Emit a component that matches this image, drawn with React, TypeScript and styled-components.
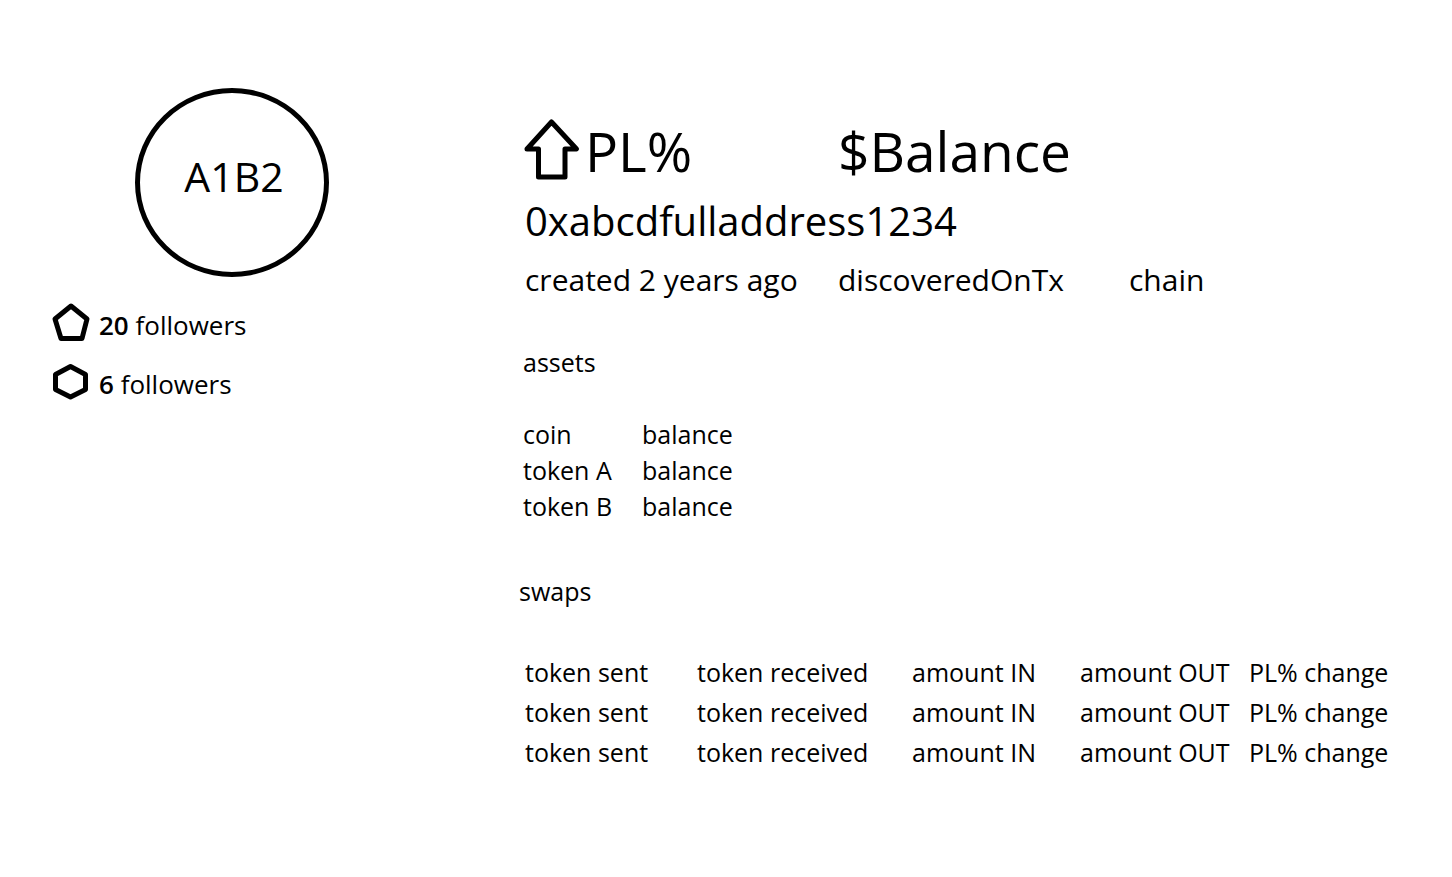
import React from "react";
import styled, { createGlobalStyle } from "styled-components";

const GlobalStyle = createGlobalStyle`
  * { box-sizing: border-box; }
  body {
    margin: 0;
    background: #fff;
    color: #000;
    font-family: "Segoe UI", "Open Sans", "Noto Sans", sans-serif;
    font-size: 25px;
    line-height: 36px;
  }
`;

const Page = styled.div`
  display: flex;
  align-items: flex-start;
  gap: 107px;
  padding: 88px 48px 88px 52px;
`;

const Sidebar = styled.aside`
  flex: 0 0 360px;
  display: flex;
  flex-direction: column;
  gap: 28px;
`;

const Avatar = styled.div`
  align-self: center;
  display: flex;
  align-items: center;
  justify-content: center;
  width: 194px;
  height: 189px;
  padding: 0 0 14px 4px;
  border: 5px solid #000;
  border-radius: 50%;
  font-size: 41px;
`;

const FollowerList = styled.ul`
  display: flex;
  flex-direction: column;
  gap: 19px;
  margin: 0;
  padding: 0;
  list-style: none;
`;

const Follower = styled.li`
  display: flex;
  align-items: center;
  gap: 9px;
  font-size: 26px;
  line-height: 40px;

  strong { font-weight: 600; }
`;

const Shape = styled.svg`
  flex: none;
  overflow: visible;
  fill: none;
  stroke: #000;
  stroke-width: 5px;
  stroke-linejoin: round;
`;

const Main = styled.main`
  flex: 1;
  min-width: 0;
  padding-top: 28px;
`;

const Intro = styled.header`
  padding-left: 6px;
`;

const Columns = styled.div`
  display: grid;
  grid-template-columns: 313px 291px 1fr;
  white-space: nowrap;
`;

const Headline = styled(Columns)`
  font-size: 55px;
  line-height: 70px;
`;

const Profit = styled.div`
  display: flex;
  align-items: center;
  gap: 6px;
`;

const Address = styled.h1`
  margin: 6px 0 11px;
  font-size: 40px;
  font-weight: 400;
  line-height: 58px;
`;

const Meta = styled(Columns)`
  font-size: 30px;
  line-height: 38px;
`;

const Section = styled.section<{ $indent?: number }>`
  margin-top: 45px;
  padding-left: ${(p) => p.$indent ?? 0}px;

  & + & { margin-top: 49px; }
`;

const SectionTitle = styled.h2`
  margin: 0;
  font-size: 25px;
  font-weight: 400;
`;

const Table = styled.table<{ $row: number; $top: number; $indent?: number }>`
  margin: ${(p) => p.$top}px 0 0 ${(p) => p.$indent ?? 0}px;
  border-collapse: collapse;
  white-space: nowrap;

  td {
    height: ${(p) => p.$row}px;
    padding: 0;
  }
`;

const Col = styled.col<{ $w?: number }>`
  width: ${(p) => (p.$w ? `${p.$w}px` : "auto")};
`;

const assets = ["coin", "token A", "token B"];
const swaps = [1, 2, 3];

export default function App() {
  return (
    <>
      <GlobalStyle />
      <Page>
        <Sidebar>
          <Avatar>A1B2</Avatar>
          <FollowerList>
            <Follower>
              <Shape width="38" height="40" viewBox="0 0 38 40" aria-hidden="true">
                <path d="M19 1 35 14 30 33.500H9L3 14Z" />
              </Shape>
              <span><strong>20</strong> followers</span>
            </Follower>
            <Follower>
              <Shape width="38" height="40" viewBox="0 0 38 40" aria-hidden="true">
                <path d="M18.500 2.500 33.500 10.500V25.500L18.500 33 3.500 25.500V10.500Z" />
              </Shape>
              <span><strong>6</strong> followers</span>
            </Follower>
          </FollowerList>
        </Sidebar>
        <Main>
          <Intro>
            <Headline>
              <Profit>
                <Shape width="54" height="62" viewBox="1 0 54 62" aria-hidden="true">
                  <path d="M27.500 2 52.500 29H41V57H14.500V29H3Z" />
                </Shape>
                <span>PL%</span>
              </Profit>
              <span>$Balance</span>
            </Headline>
            <Address>0xabcdfulladdress1234</Address>
            <Meta>
              <span>created 2 years ago</span>
              <span>discoveredOnTx</span>
              <span>chain</span>
            </Meta>
          </Intro>
          <Section $indent={4}>
            <SectionTitle>assets</SectionTitle>
            <Table $row={36} $top={36} aria-label="assets">
              <colgroup>
                <Col $w={119} />
                <Col />
              </colgroup>
              <tbody>
                {assets.map((name) => (
                  <tr key={name}>
                    <td>{name}</td>
                    <td>balance</td>
                  </tr>
                ))}
              </tbody>
            </Table>
          </Section>
          <Section>
            <SectionTitle>swaps</SectionTitle>
            <Table $row={40} $top={43} $indent={6} aria-label="swaps">
              <colgroup>
                <Col $w={172} />
                <Col $w={215} />
                <Col $w={168} />
                <Col $w={169} />
                <Col />
              </colgroup>
              <tbody>
                {swaps.map((id) => (
                  <tr key={id}>
                    <td>token sent</td>
                    <td>token received</td>
                    <td>amount IN</td>
                    <td>amount OUT</td>
                    <td>PL% change</td>
                  </tr>
                ))}
              </tbody>
            </Table>
          </Section>
        </Main>
      </Page>
    </>
  );
}
